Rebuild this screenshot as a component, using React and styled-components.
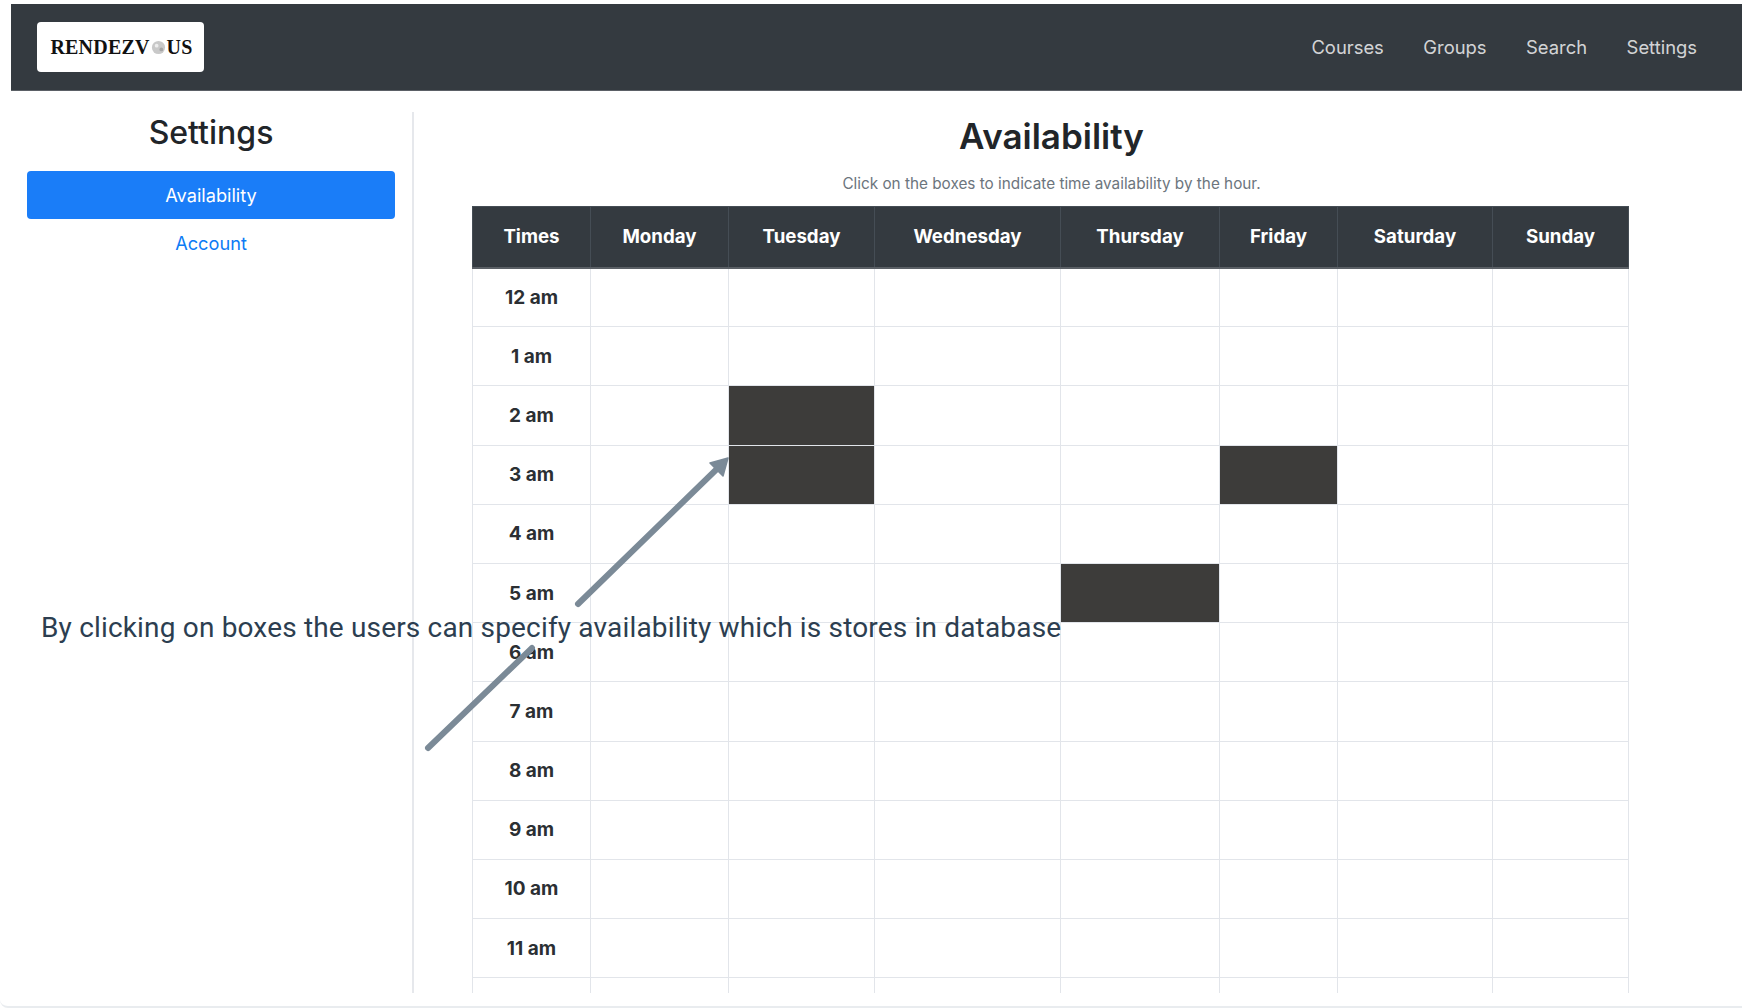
import React from 'react';
import styled, { createGlobalStyle } from 'styled-components';

const GlobalStyle = createGlobalStyle`
	html, body {
		margin: 0;
		height: 100%;
		overflow: hidden;
		background: #fff;
	}
	body {
		font-family: Inter, 'Liberation Sans', sans-serif;
		color: #212529;
	}
	* {
		box-sizing: border-box;
	}
`;

const Page = styled.div`
	position: relative;
	width: 1742px;
	height: 1008px;
	padding: 4px 0 0 11px;
	border-bottom: 2px solid #e9ecef;
	border-bottom-left-radius: 8px;
	overflow: hidden;
`;

const Navbar = styled.nav`
	height: 87px;
	background: #343a40;
	display: flex;
	align-items: center;
	justify-content: space-between;
	padding: 0 45px 0 26px;
	border-bottom: 1px solid #5b6066;
`;

const Logo = styled.div`
	width: 167px;
	height: 50px;
	background: #fff;
	border-radius: 4px;
	display: flex;
	align-items: center;
	justify-content: center;
	padding-left: 2px;
	font-family: 'Liberation Serif', serif;
	font-weight: 700;
	font-size: 20px;
	letter-spacing: 0.2px;
	color: #111;
`;

const LogoDot = styled.svg`
	width: 15px;
	height: 15px;
	margin: 0 1px;
`;

const NavLinks = styled.div`
	display: flex;
	gap: 39.5px;
`;

const NavLink = styled.a`
	font-size: 18.4px;
	color: rgba(255, 255, 255, 0.8);
`;

const Content = styled.div`
	display: flex;
	margin-top: 21px;
	height: 881px;
`;

const Sidebar = styled.aside`
	width: 403px;
	flex: none;
	padding: 0 17px 0 16px;
	border-right: 2px solid #e6e8ec;
`;

const SidebarTitle = styled.h2`
	margin: 0 0 21px;
	height: 38px;
	line-height: 42px;
	font-size: 32px;
	font-weight: 500;
	text-align: center;
`;

const SideItem = styled.a`
	display: block;
	height: ${(props) => (props.$active ? '48px' : '49px')};
	line-height: ${(props) => (props.$active ? '48px' : '49px')};
	border-radius: 4px;
	text-align: center;
	font-size: 18.2px;
	color: ${(props) => (props.$active ? '#fff' : '#0d7bf5')};
	background: ${(props) => (props.$active ? '#1a7df8' : 'transparent')};
`;

const Main = styled.main`
	flex: 1;
	padding: 0 111px 0 58px;
	overflow: hidden;
`;

const Heading = styled.h1`
	margin: 0;
	height: 46px;
	line-height: 48px;
	font-size: 35px;
	font-weight: 600;
	text-align: center;
`;

const Hint = styled.p`
	margin: 8px 0 0;
	height: 40px;
	line-height: 36px;
	font-size: 15.3px;
	color: #6c757d;
	text-align: center;
`;

const Table = styled.table`
	width: 1156px;
	table-layout: fixed;
	border-collapse: collapse;
`;

const HeadCell = styled.th`
	height: 61px;
	padding: 0;
	background: #343a40;
	border: 1px solid #454d55;
	border-bottom: 2px solid #5b6066;
	color: #fff;
	font-size: 18.7px;
	font-weight: 700;
`;

const TimeCell = styled.th`
	height: 59.2px;
	padding: 0;
	border: 1px solid #e2e5ea;
	font-size: 19px;
	font-weight: 700;
	color: #2b2f33;
`;

const SlotCell = styled.td`
	padding: 0;
	border: 1px solid #e2e5ea;
	background: ${(props) => (props.$busy ? '#3d3c3a' : '#fff')};
`;

const Note = styled.div`
	position: absolute;
	left: 41px;
	top: 608px;
	font-family: Roboto, sans-serif;
	font-size: 28px;
	line-height: 40px;
	letter-spacing: 0.17px;
	color: #2c3e50;
	white-space: nowrap;
`;

const ArrowLayer = styled.svg`
	position: absolute;
	left: 0;
	top: 0;
	pointer-events: none;
`;

const columns = [
	{ name: 'Times', width: 118 },
	{ name: 'Monday', width: 138 },
	{ name: 'Tuesday', width: 146 },
	{ name: 'Wednesday', width: 186 },
	{ name: 'Thursday', width: 159 },
	{ name: 'Friday', width: 118 },
	{ name: 'Saturday', width: 155 },
	{ name: 'Sunday', width: 136 },
];

const hours = ['12 am', '1 am', '2 am', '3 am', '4 am', '5 am', '6 am', '7 am', '8 am', '9 am', '10 am', '11 am', ''];

const busySlots = {
	'2 am': ['Tuesday'],
	'3 am': ['Tuesday', 'Friday'],
	'5 am': ['Thursday'],
};

function App() {
	return (
		<Page>
			<GlobalStyle />
			<Navbar>
				<Logo>
					RENDEZV
					<LogoDot viewBox="0 0 16 16">
						<circle cx="8" cy="8" r="7" fill="#c9c9c9" />
						<circle cx="6" cy="6" r="2" fill="#eee" />
						<circle cx="11" cy="10" r="2" fill="#a5a5a5" />
					</LogoDot>
					US
				</Logo>
				<NavLinks>
					<NavLink>Courses</NavLink>
					<NavLink>Groups</NavLink>
					<NavLink>Search</NavLink>
					<NavLink>Settings</NavLink>
				</NavLinks>
			</Navbar>
			<Content>
				<Sidebar>
					<SidebarTitle>Settings</SidebarTitle>
					<SideItem $active>Availability</SideItem>
					<SideItem>Account</SideItem>
				</Sidebar>
				<Main>
					<Heading>Availability</Heading>
					<Hint>Click on the boxes to indicate time availability by the hour.</Hint>
					<Table>
						<colgroup>
							{columns.map((col) => (
								<col key={col.name} width={col.width} />
							))}
						</colgroup>
						<thead>
							<tr>
								{columns.map((col) => (
									<HeadCell key={col.name}>{col.name}</HeadCell>
								))}
							</tr>
						</thead>
						<tbody>
							{hours.map((hour) => (
								<tr key={hour}>
									<TimeCell>{hour}</TimeCell>
									{columns.slice(1).map((col) => (
										<SlotCell key={col.name} $busy={busySlots[hour]?.includes(col.name)} />
									))}
								</tr>
							))}
						</tbody>
					</Table>
				</Main>
			</Content>
			<Note>By clicking on boxes the users can specify availability which is stores in database</Note>
			<ArrowLayer width="1742" height="1008" viewBox="0 0 1742 1008">
				<path d="M578 604 L722 464" stroke="#7b8a97" strokeWidth="6" strokeLinecap="round" fill="none" />
				<path d="M728 458 L710 463 L723 476 Z" fill="#7b8a97" stroke="#7b8a97" strokeWidth="1.5" strokeLinejoin="round" />
				<path d="M428 748 L532 648" stroke="#7b8a97" strokeWidth="6" strokeLinecap="round" fill="none" />
			</ArrowLayer>
		</Page>
	);
}

export default App;
